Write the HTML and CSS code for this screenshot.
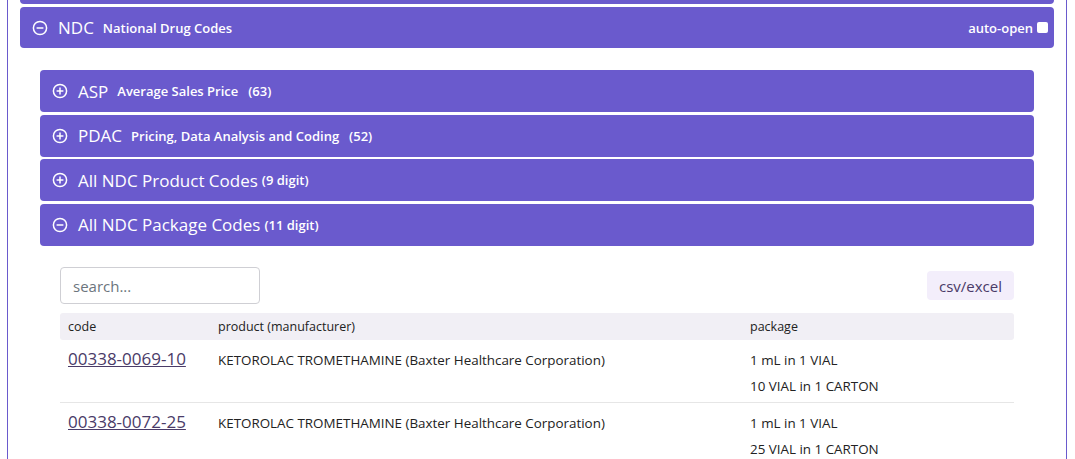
FILE: index.html
```html
<!DOCTYPE html>
<html lang="en">
<head>
    <meta charset="UTF-8">
    <meta name="viewport" content="width=device-width, initial-scale=1.0">
    <title>NDC</title>
    <link rel="stylesheet" href="styles.css">
</head>
<body>
    <div class="panel">
        <div class="bar prev-bar"></div>

        <div class="bar top-bar">
            <svg class="toggle" viewBox="0 0 16 16"><circle cx="8" cy="8" r="6.6"/><line x1="4.6" y1="8" x2="11.4" y2="8"/></svg>
            <span class="title">NDC</span>
            <span class="sub">National Drug Codes</span>
            <label class="auto-open">auto-open <span class="check"></span></label>
        </div>

        <div class="section-body">
            <div class="bar">
                <svg class="toggle" viewBox="0 0 16 16"><circle cx="8" cy="8" r="6.6"/><line x1="4.6" y1="8" x2="11.4" y2="8"/><line x1="8" y1="4.6" x2="8" y2="11.4"/></svg>
                <span class="title">ASP</span>
                <span class="sub">Average Sales Price</span>
                <span class="sub count">(63)</span>
            </div>
            <div class="bar">
                <svg class="toggle" viewBox="0 0 16 16"><circle cx="8" cy="8" r="6.6"/><line x1="4.6" y1="8" x2="11.4" y2="8"/><line x1="8" y1="4.6" x2="8" y2="11.4"/></svg>
                <span class="title">PDAC</span>
                <span class="sub">Pricing, Data Analysis and Coding</span>
                <span class="sub count">(52)</span>
            </div>
            <div class="bar">
                <svg class="toggle" viewBox="0 0 16 16"><circle cx="8" cy="8" r="6.6"/><line x1="4.6" y1="8" x2="11.4" y2="8"/><line x1="8" y1="4.6" x2="8" y2="11.4"/></svg>
                <span class="title tight">All NDC Product Codes</span>
                <span class="sub">(9 digit)</span>
            </div>
            <div class="bar">
                <svg class="toggle" viewBox="0 0 16 16"><circle cx="8" cy="8" r="6.6"/><line x1="4.6" y1="8" x2="11.4" y2="8"/></svg>
                <span class="title tight">All NDC Package Codes</span>
                <span class="sub">(11 digit)</span>
            </div>

            <div class="codes">
                <div class="tools">
                    <input type="text" class="search" placeholder="search...">
                    <button class="export">csv/excel</button>
                </div>
                <table class="code-table">
                    <thead>
                        <tr>
                            <th class="col-code">code</th>
                            <th class="col-product">product (manufacturer)</th>
                            <th>package</th>
                        </tr>
                    </thead>
                    <tbody>
                        <tr>
                            <td><a href="#">00338-0069-10</a></td>
                            <td>KETOROLAC TROMETHAMINE (Baxter Healthcare Corporation)</td>
                            <td><div>1 mL in 1 VIAL</div><div>10 VIAL in 1 CARTON</div></td>
                        </tr>
                        <tr>
                            <td><a href="#">00338-0072-25</a></td>
                            <td>KETOROLAC TROMETHAMINE (Baxter Healthcare Corporation)</td>
                            <td><div>1 mL in 1 VIAL</div><div>25 VIAL in 1 CARTON</div></td>
                        </tr>
                    </tbody>
                </table>
            </div>
        </div>
    </div>
</body>
</html>
```

FILE: styles.css
```css
body {
    margin: 0;
    font-family: "Open Sans", "Noto Sans", sans-serif;
    color: #222;
    background: #fff;
    overflow: hidden;
}

.panel {
    margin-left: 7px;
    width: 1060px;
    height: 470px;
    border-left: 1px solid #6a5acd;
    border-right: 1px solid #6a5acd;
    padding: 0 12px;
    box-sizing: border-box;
}

.bar {
    display: flex;
    align-items: center;
    height: 42px;
    margin-bottom: 2.5px;
    padding: 0 12px;
    background-color: #6a5acd;
    color: white;
    border-radius: 4px;
}

.prev-bar {
    height: 4px;
    margin-bottom: 3px;
    border-radius: 0 0 4px 4px;
}

.top-bar {
    height: 41px;
    margin-bottom: 0;
}

.toggle {
    width: 16px;
    height: 16px;
    margin-right: 10px;
    fill: none;
    stroke: white;
    stroke-width: 1.5;
}

.title {
    font-size: 17px;
    margin-right: 9px;
}

.title.tight {
    margin-right: 4px;
}

.sub {
    font-size: 13px;
    font-weight: 600;
}

.count {
    margin-left: 10px;
}

.auto-open {
    margin-left: auto;
    font-size: 13px;
    font-weight: 600;
    display: flex;
    align-items: center;
    gap: 4px;
    margin-right: -6px;
}

.check {
    width: 11px;
    height: 11px;
    background: white;
    border-radius: 2px;
}

.section-body {
    padding: 22px 20px 0;
}

.codes {
    padding: 19px 20px 0;
}

.tools {
    display: flex;
    align-items: center;
    justify-content: space-between;
    margin-bottom: 9px;
}

.search {
    width: 200px;
    height: 37px;
    box-sizing: border-box;
    padding: 0 12px;
    font-family: inherit;
    font-size: 15px;
    border: 1px solid #cfcfd4;
    border-radius: 4px;
}

.search::placeholder {
    color: #6c757d;
}

.export {
    font-family: inherit;
    font-size: 15px;
    color: #4a3b68;
    background-color: #f3eefb;
    border: none;
    border-radius: 4px;
    height: 29px;
    padding: 0 12px;
}

.code-table {
    width: 100%;
    border-collapse: collapse;
    font-size: 13.4px;
}

.code-table th {
    text-align: left;
    font-weight: normal;
    font-size: 12.5px;
    background-color: #f1eff5;
    height: 27px;
    padding: 0 8px;
}

.code-table th:first-child {
    border-radius: 3px 0 0 3px;
}

.code-table th:last-child {
    border-radius: 0 3px 3px 0;
}

.col-code {
    width: 134px;
}

.col-product {
    width: 516px;
}

.code-table td {
    vertical-align: top;
    padding: 7px 8px 3px;
    border-bottom: 1px solid #e6e6e6;
    line-height: 26px;
}

.code-table a {
    font-size: 17px;
    color: #4a3b68;
    line-height: 24px;
}
```
